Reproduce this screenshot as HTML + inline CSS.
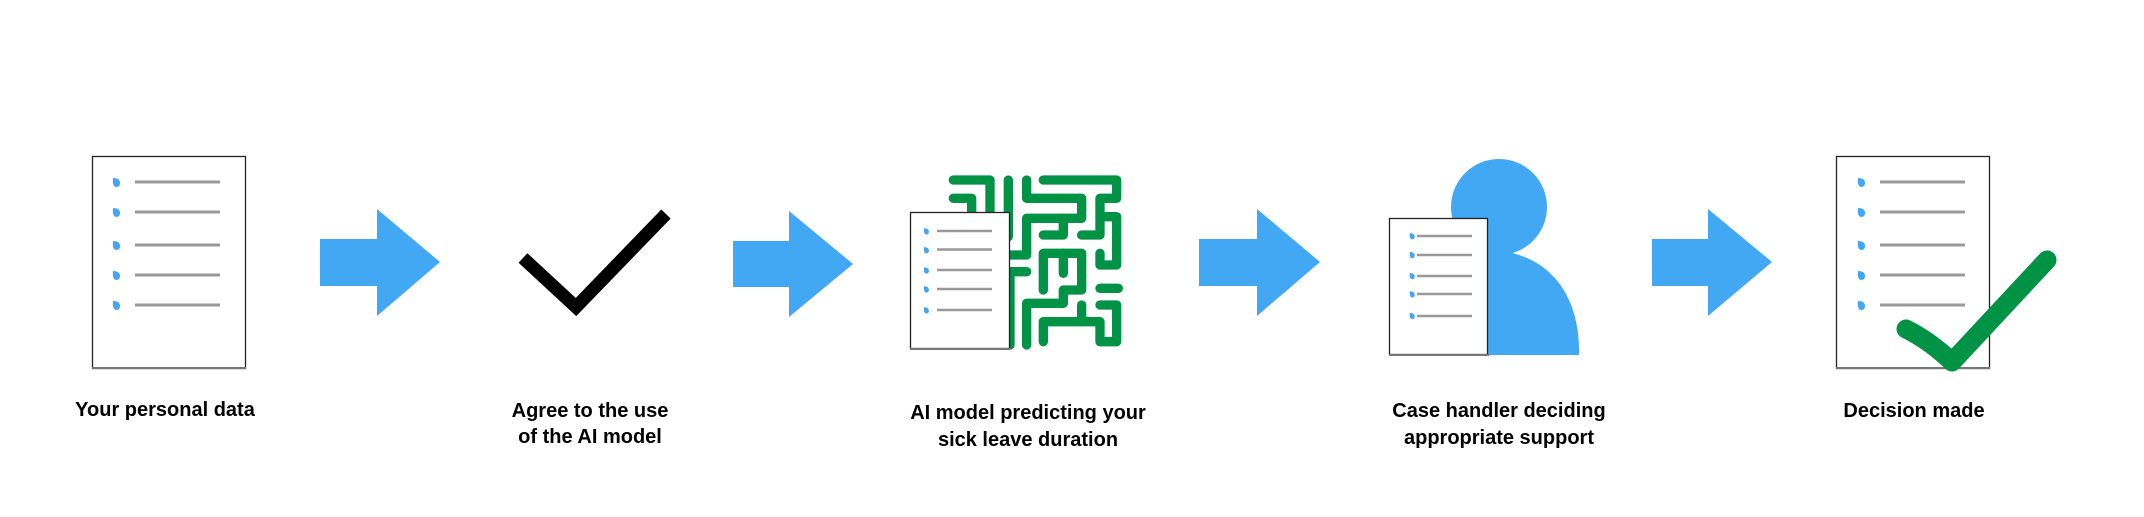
<!DOCTYPE html>
<html><head><meta charset="utf-8"><style>
html,body{margin:0;padding:0;background:#fff;width:2144px;height:517px;overflow:hidden}
svg{display:block}
text{font-family:"Liberation Sans",Arial,sans-serif;font-weight:bold;font-size:20px;fill:#000;text-anchor:middle}
</style></head><body>
<svg width="2144" height="517" viewBox="0 0 2144 517" xmlns="http://www.w3.org/2000/svg">
<defs>
<g id="bl"><path d="M-3,-4 Q4,-4 4,1 Q4,5 0,5 Q-4,4 -3,-4Z" fill="#42a5f5"/></g>
</defs>
<!-- Doc 1 -->
<rect x="92.5" y="156.5" width="153" height="212" fill="#fff" stroke="#222" stroke-width="1.3"/>
<line x1="92" y1="368" x2="246" y2="368" stroke="#777" stroke-width="2"/>
<g stroke="#999" stroke-width="3">
<line x1="135" y1="182" x2="220" y2="182"/><line x1="135" y1="212" x2="220" y2="212"/><line x1="135" y1="245" x2="220" y2="245"/><line x1="135" y1="275" x2="220" y2="275"/><line x1="135" y1="305" x2="220" y2="305"/></g>
<use href="#bl" x="116" y="182"/><use href="#bl" x="116" y="212"/><use href="#bl" x="116" y="245"/><use href="#bl" x="116" y="275"/><use href="#bl" x="116" y="305"/>
<!-- Arrow 1 -->
<path d="M320,239 H377 V209 L440,262 L377,316 V286 H320Z" fill="#42a8f4"/>
<!-- Black check -->
<polyline points="523,258 576,307 666,214" fill="none" stroke="#000" stroke-width="13"/>
<!-- Arrow 2 -->
<path d="M733,241 H789 V211 L853,264 L789,317 V287 H733Z" fill="#42a8f4"/>
<!-- Maze -->
<g transform="translate(900,165) scale(0.3333)" fill="none" stroke="#009245" stroke-width="28" stroke-linecap="round" stroke-linejoin="round">
<path d="M160,45 H270 V140"/>
<path d="M160,100 H215 V140"/>
<path d="M325,45 V215"/>
<path d="M380,45 V100 H545 V160 H380 V270 H330"/>
<path d="M490,160 V210 H430"/>
<path d="M430,45 H650 V100 H600 V210 H545"/>
<path d="M600,155 H650 V300 H600 V265"/>
<path d="M330,320 H380"/>
<path d="M430,375 V265 H545 V375 H490 V415 H380 V540"/>
<path d="M490,265 V325"/>
<path d="M330,330 V540"/>
<path d="M600,370 H655"/>
<path d="M600,420 H650 V530 H600 V470 H430 V530"/>
<path d="M545,420 V470"/>
</g>
<!-- Doc 3 -->
<rect x="910.5" y="212.5" width="99" height="136" fill="#fff" stroke="#222" stroke-width="1.3"/>
<line x1="910" y1="349" x2="1010" y2="349" stroke="#777" stroke-width="2"/>
<g stroke="#999" stroke-width="2.5">
<line x1="937" y1="231" x2="992" y2="231"/><line x1="937" y1="249.5" x2="992" y2="249.5"/><line x1="937" y1="270" x2="992" y2="270"/><line x1="937" y1="289" x2="992" y2="289"/><line x1="937" y1="310" x2="992" y2="310"/></g>
<g transform="scale(0.7)"><use href="#bl" x="1323" y="330"/><use href="#bl" x="1323" y="357"/><use href="#bl" x="1323" y="386"/><use href="#bl" x="1323" y="413"/><use href="#bl" x="1323" y="443"/></g>
<!-- Arrow 3 -->
<path d="M1199,239 H1257 V209 L1320,262 L1257,316 V286 H1199Z" fill="#42a8f4"/>
<!-- Person -->
<ellipse cx="1499" cy="207" rx="48" ry="48" fill="#42a8f4"/>
<path d="M1508,252 C1555,262 1580,300 1579,355 H1470 V250Z" fill="#42a8f4"/>
<!-- Doc 4 -->
<rect x="1389.5" y="218.5" width="98" height="136" fill="#fff" stroke="#222" stroke-width="1.3"/>
<line x1="1389" y1="355" x2="1489" y2="355" stroke="#777" stroke-width="2"/>
<g stroke="#999" stroke-width="2.5">
<line x1="1417" y1="236" x2="1472" y2="236"/><line x1="1417" y1="255" x2="1472" y2="255"/><line x1="1417" y1="276" x2="1472" y2="276"/><line x1="1417" y1="294" x2="1472" y2="294"/><line x1="1417" y1="316" x2="1472" y2="316"/></g>
<g transform="scale(0.7)"><use href="#bl" x="2017" y="337"/><use href="#bl" x="2017" y="364"/><use href="#bl" x="2017" y="394"/><use href="#bl" x="2017" y="420"/><use href="#bl" x="2017" y="451"/></g>
<!-- Arrow 4 -->
<path d="M1652,239 H1708 V209 L1772,262 L1708,316 V286 H1652Z" fill="#42a8f4"/>
<!-- Doc 5 -->
<rect x="1836.5" y="156.5" width="153" height="212" fill="#fff" stroke="#222" stroke-width="1.3"/>
<line x1="1836" y1="368" x2="1990" y2="368" stroke="#777" stroke-width="2"/>
<g stroke="#999" stroke-width="3">
<line x1="1880" y1="182" x2="1965" y2="182"/><line x1="1880" y1="212" x2="1965" y2="212"/><line x1="1880" y1="245" x2="1965" y2="245"/><line x1="1880" y1="275" x2="1965" y2="275"/><line x1="1880" y1="305" x2="1965" y2="305"/></g>
<use href="#bl" x="1861" y="182"/><use href="#bl" x="1861" y="212"/><use href="#bl" x="1861" y="245"/><use href="#bl" x="1861" y="275"/><use href="#bl" x="1861" y="305"/>
<!-- Green check -->
<path d="M1906,329 Q1930,341 1952,362 L2047,260" fill="none" stroke="#009245" stroke-width="19" stroke-linecap="round" stroke-linejoin="round"/>
<!-- Labels -->
<text x="165" y="416">Your personal data</text>
<text x="590" y="417">Agree to the use</text>
<text x="590" y="443">of the AI model</text>
<text x="1028" y="419">AI model predicting your</text>
<text x="1028" y="446">sick leave duration</text>
<text x="1499" y="417">Case handler deciding</text>
<text x="1499" y="444">appropriate support</text>
<text x="1914" y="417">Decision made</text>
</svg>
</body></html>
